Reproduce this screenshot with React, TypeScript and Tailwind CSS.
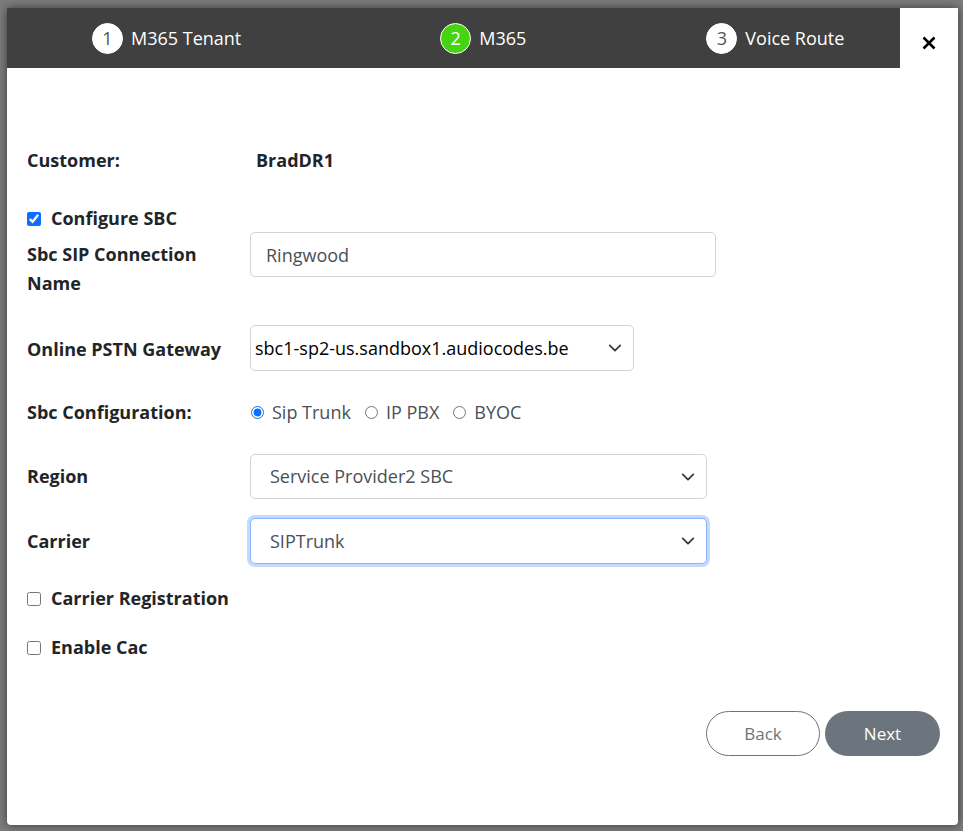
import { useState } from 'react'

const font = { fontFamily: '"Open Sans", "Noto Sans", sans-serif' }

function Chevron() {
  return (
    <svg
      className="pointer-events-none absolute right-[12px] top-1/2 -translate-y-1/2"
      width="14"
      height="14"
      viewBox="0 0 16 16"
    >
      <path d="M2 5l6 6 6-6" fill="none" stroke="#343a40" strokeWidth="2" strokeLinecap="round" strokeLinejoin="round" />
    </svg>
  )
}

function Step({ n, label, active }: { n: number; label: string; active?: boolean }) {
  return (
    <div className="flex items-center gap-[8px]">
      <span
        className={`flex h-[31px] w-[31px] items-center justify-center rounded-full border border-white text-[18px] ${
          active ? 'bg-[#44d412] text-white' : 'bg-white text-[#555]'
        }`}
      >
        {n}
      </span>
      <span className="text-[18px] text-white">{label}</span>
    </div>
  )
}

export default function App() {
  const [configure, setConfigure] = useState(true)
  const [sbcType, setSbcType] = useState('sip')
  const [carrierReg, setCarrierReg] = useState(false)
  const [cac, setCac] = useState(false)

  return (
    <div className="min-h-[831px] bg-[#7c7c7c] pl-[7px] pt-[8px]" style={font}>
      <div className="flex h-[817px] w-[951px] flex-col rounded-b-[4px] bg-white shadow-[0_0_10px_rgba(0,0,0,0.55)]">
        {/* Steps header */}
        <div className="flex h-[60px] shrink-0">
          <div className="flex flex-1 items-center bg-[#404040] pl-[85px]">
            <Step n={1} label="M365 Tenant" />
            <div className="ml-[199px]">
              <Step n={2} label="M365" active />
            </div>
            <div className="ml-[180px]">
              <Step n={3} label="Voice Route" />
            </div>
          </div>
          <button className="flex w-[58px] items-center justify-center pt-[10px] text-[22px] font-bold text-black">
            <svg width="14" height="14" viewBox="0 0 14 14">
              <path d="M1.5 1.5l11 11M12.5 1.5l-11 11" stroke="#000" strokeWidth="2.6" />
            </svg>
          </button>
        </div>

        {/* Form */}
        <div className="flex flex-1 flex-col px-[20px] text-[18px] text-[#212529]">
          <div className="mt-[79px] flex items-center font-bold">
            <span className="w-[229px]">Customer:</span>
            <span>BradDR1</span>
          </div>

          <label className="mt-[31px] flex items-center gap-[10px] font-bold">
            <input
              type="checkbox"
              checked={configure}
              onChange={(e) => setConfigure(e.target.checked)}
              className="h-[14px] w-[14px] accent-[#0d6efd]"
            />
            Configure SBC
          </label>

          <div className="flex items-start">
            <span className="w-[223px] pt-[8px] font-bold leading-[29px]">
              Sbc SIP Connection
              <br />
              Name
            </span>
            <input
              defaultValue="Ringwood"
              className="h-[45px] w-[466px] rounded-[5px] border border-[#ced4da] px-[15px] text-[18px] text-[#495057] outline-none"
            />
          </div>

          <div className="mt-[27px] flex items-center">
            <span className="w-[223px] pt-[2px] font-bold">Online PSTN Gateway</span>
            <div className="relative w-[384px]">
              <select className="h-[46px] w-full appearance-none rounded-[5px] border border-[#ced4da] bg-white pl-[4px] text-[18px] text-black outline-none">
                <option>sbc1-sp2-us.sandbox1.audiocodes.be</option>
              </select>
              <Chevron />
            </div>
          </div>

          <div className="mt-[28px] flex items-center">
            <span className="w-[223px] font-bold">Sbc Configuration:</span>
            <div className="flex items-center text-[18px] text-[#495057]">
              {[
                ['sip', 'Sip Trunk'],
                ['ippbx', 'IP PBX'],
                ['byoc', 'BYOC'],
              ].map(([v, l]) => (
                <label key={v} className="mr-[13px] flex items-center gap-[8px]">
                  <input
                    type="radio"
                    name="sbc"
                    checked={sbcType === v}
                    onChange={() => setSbcType(v)}
                    className="ml-[1px] h-[13px] w-[13px] accent-[#0d6efd]"
                  />
                  {l}
                </label>
              ))}
            </div>
          </div>

          <div className="mt-[28px] flex items-center">
            <span className="w-[223px] font-bold">Region</span>
            <div className="relative w-[457px]">
              <select className="h-[45px] w-full appearance-none rounded-[5px] border border-[#ced4da] bg-white pl-[19px] text-[18px] text-[#495057] outline-none">
                <option>Service Provider2 SBC</option>
              </select>
              <Chevron />
            </div>
          </div>

          <div className="mt-[19px] flex items-center">
            <span className="w-[223px] font-bold">Carrier</span>
            <div className="relative w-[457px]">
              <select className="h-[46px] w-full appearance-none rounded-[5px] border border-[#86b7fe] bg-white pl-[19px] text-[18px] text-[#495057] shadow-[0_0_0_3px_rgba(13,110,253,0.25)] outline-none">
                <option>SIPTrunk</option>
              </select>
              <Chevron />
            </div>
          </div>

          <label className="mt-[21px] flex items-center gap-[10px] font-bold">
            <input
              type="checkbox"
              checked={carrierReg}
              onChange={(e) => setCarrierReg(e.target.checked)}
              className="h-[14px] w-[14px] accent-[#0d6efd]"
            />
            Carrier Registration
          </label>

          <label className="mt-[22px] flex items-center gap-[10px] font-bold">
            <input
              type="checkbox"
              checked={cac}
              onChange={(e) => setCac(e.target.checked)}
              className="h-[14px] w-[14px] accent-[#0d6efd]"
            />
            Enable Cac
          </label>

          <div className="mt-[50px] flex justify-end gap-[5px]">
            <button className="h-[45px] w-[114px] rounded-full border border-[#6c757d] bg-white text-[17px] text-[#6c757d]">
              Back
            </button>
            <button className="mr-[-2px] h-[45px] w-[115px] rounded-full bg-[#6c757d] text-[17px] text-white">
              Next
            </button>
          </div>
        </div>
      </div>
    </div>
  )
}
